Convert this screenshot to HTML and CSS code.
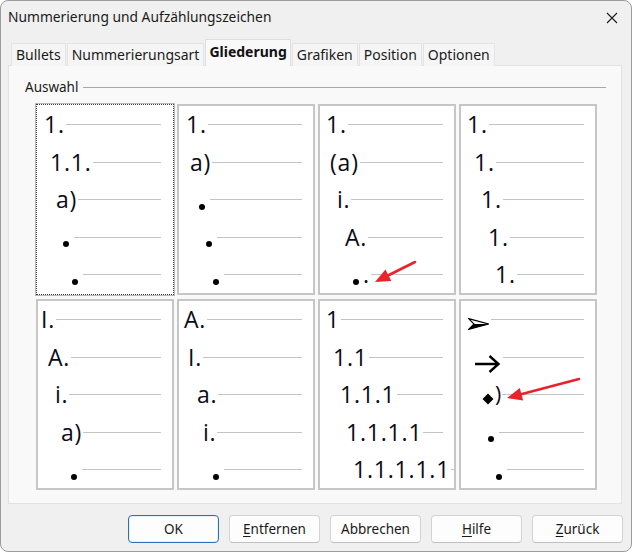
FILE: index.html
```html
<!DOCTYPE html>
<html lang="de">
<head>
<meta charset="utf-8">
<title>Nummerierung und Aufzählungszeichen</title>
<link rel="stylesheet" href="styles.css">
</head>
<body>
<div class="window">
  <div class="titlebar">
    <span class="title">Nummerierung und Aufzählungszeichen</span>
    <svg class="close" width="12" height="12" viewBox="0 0 12 12"><path d="M1 1 L11 11 M11 1 L1 11" stroke="#1c1c1c" stroke-width="1.1" fill="none"/></svg>
  </div>
  <div class="tabs">
    <div class="tab">Bullets</div>
    <div class="tab">Nummerierungsart</div>
    <div class="tab active">Gliederung</div>
    <div class="tab">Grafiken</div>
    <div class="tab">Position</div>
    <div class="tab">Optionen</div>
  </div>
  <div class="panel">
    <div class="legend"><span class="legend-text">Auswahl</span><span class="legend-rule"></span></div>
    <div class="grid">
      <div class="cell sel">
        <div class="row p6"><span class="num">1.</span><span class="rule"></span></div>
        <div class="row p12"><span class="num">1.1.</span><span class="rule"></span></div>
        <div class="row p18"><span class="num">a)</span><span class="rule"></span></div>
        <div class="row p25"><span class="dot"></span><span class="rule"></span></div>
        <div class="row p34"><span class="dot"></span><span class="rule"></span></div>
      </div>
      <div class="cell">
        <div class="row p7"><span class="num">1.</span><span class="rule"></span></div>
        <div class="row p11"><span class="num">a)</span><span class="rule"></span></div>
        <div class="row p20"><span class="dot"></span><span class="rule"></span></div>
        <div class="row p27"><span class="dot"></span><span class="rule"></span></div>
        <div class="row p34"><span class="dot"></span><span class="rule"></span></div>
      </div>
      <div class="cell">
        <div class="row p6"><span class="num">1.</span><span class="rule"></span></div>
        <div class="row p10"><span class="num">(a)</span><span class="rule"></span></div>
        <div class="row p17"><span class="num">i.</span><span class="rule"></span></div>
        <div class="row p25"><span class="num">A.</span><span class="rule"></span></div>
        <div class="row p33"><span class="dot"></span><span class="num">.</span><span class="rule"></span></div>
        <svg class="arrow" viewBox="0 0 134 187" width="134" height="187"><line x1="95" y1="156" x2="68" y2="169.5" stroke="#e8232b" stroke-width="2.6" stroke-linecap="round"/><polygon points="55,176 71.3,175.1 65.5,163.5" fill="#e8232b"/></svg>
      </div>
      <div class="cell">
        <div class="row p6"><span class="num">1.</span><span class="rule"></span></div>
        <div class="row p13"><span class="num">1.</span><span class="rule"></span></div>
        <div class="row p20"><span class="num">1.</span><span class="rule"></span></div>
        <div class="row p27"><span class="num">1.</span><span class="rule"></span></div>
        <div class="row p34"><span class="num">1.</span><span class="rule"></span></div>
      </div>
      <div class="cell">
        <div class="row p3"><span class="num">I.</span><span class="rule"></span></div>
        <div class="row p10"><span class="num">A.</span><span class="rule"></span></div>
        <div class="row p17"><span class="num">i.</span><span class="rule"></span></div>
        <div class="row p23"><span class="num">a)</span><span class="rule"></span></div>
        <div class="row p33"><span class="dot"></span><span class="rule"></span></div>
      </div>
      <div class="cell">
        <div class="row p5"><span class="num">A.</span><span class="rule"></span></div>
        <div class="row p9"><span class="num">I.</span><span class="rule"></span></div>
        <div class="row p18"><span class="num">a.</span><span class="rule"></span></div>
        <div class="row p24"><span class="num">i.</span><span class="rule"></span></div>
        <div class="row p34"><span class="dot"></span><span class="rule"></span></div>
      </div>
      <div class="cell">
        <div class="row p6"><span class="num">1</span><span class="rule"></span></div>
        <div class="row p13"><span class="num">1.1</span><span class="rule"></span></div>
        <div class="row p20"><span class="num">1.1.1</span><span class="rule"></span></div>
        <div class="row p26"><span class="num">1.1.1.1</span><span class="rule"></span></div>
        <div class="row p33"><span class="num">1.1.1.1.1</span><span class="rule"></span></div>
      </div>
      <div class="cell">
        <div class="row p7">
          <svg class="sym sym-arrowhead" width="21" height="12" viewBox="0 0 21 12"><polygon points="0.6,0.6 20.4,6 0.6,11.4 6,6" fill="#fff" stroke="#000" stroke-width="1.1" stroke-linejoin="miter"/><polygon points="0.6,11.4 20.4,6 6,6" fill="#000"/></svg>
          <span class="rule"></span>
        </div>
        <div class="row p14">
          <svg class="sym sym-right" width="26" height="18" viewBox="0 0 26 18"><path d="M0 9 H23.5 M14.5 1 L23.5 9 L14.5 17" stroke="#000" stroke-width="2.4" fill="none"/></svg>
          <span class="rule"></span>
        </div>
        <div class="row p21">
          <svg class="sym sym-diamond" width="12" height="12" viewBox="0 0 12 12"><polygon points="6,0.5 11.5,6 6,11.5 0.5,6" fill="#000"/></svg>
          <span class="num paren">)</span><span class="rule"></span>
        </div>
        <div class="row p27"><span class="dot"></span><span class="rule"></span></div>
        <div class="row p35"><span class="dot"></span><span class="rule"></span></div>
        <svg class="arrow" viewBox="0 0 134 187" width="134" height="187"><line x1="118" y1="78" x2="60" y2="93.3" stroke="#e8232b" stroke-width="2.6" stroke-linecap="round"/><polygon points="46,97 62.2,99.5 58.8,86.9" fill="#e8232b"/></svg>
      </div>
    </div>
  </div>
  <div class="buttons">
    <div class="btn default">OK</div>
    <div class="btn"><u>E</u>ntfernen</div>
    <div class="btn">Abbrechen</div>
    <div class="btn"><u>H</u>ilfe</div>
    <div class="btn"><u>Z</u>urück</div>
  </div>
</div>
</body>
</html>
```
FILE: styles.css
```css
html, body {
  margin: 0;
  padding: 0;
  background: #ffffff;
}

.window {
  width: 632px;
  height: 552px;
  box-sizing: border-box;
  border: 1px solid #9c9c9c;
  border-radius: 8px;
  background: #f0f0f0;
  font-family: "Noto Sans", "Open Sans", sans-serif;
  font-size: 13.5px;
  color: #1a1a1a;
  display: flex;
  flex-direction: column;
  overflow: hidden;
}

.titlebar {
  height: 39px;
  display: flex;
  align-items: flex-start;
  justify-content: space-between;
  padding: 0 13px 0 7px;
}

.title {
  margin-top: 6px;
  font-size: 13.8px;
  color: #1a1a1a;
  line-height: 20px;
}

.close {
  margin-top: 11px;
}

.tabs {
  height: 26px;
  display: flex;
  align-items: flex-end;
  gap: 1px;
  padding-left: 10px;
  position: relative;
  z-index: 1;
  margin-bottom: -1px;
  font-size: 14px;
}

.tab {
  height: 23px;
  box-sizing: border-box;
  padding: 0 4px;
  line-height: 22px;
  background: #f5f5f5;
  border: 1px solid #e4e4e4;
  border-bottom: none;
  color: #1a1a1a;
}

.tab.active {
  height: 27px;
  background: #f9f9f9;
  border-color: #dedede;
  font-weight: 700;
  line-height: 24px;
  padding: 0 3px;
  color: #111;
}

.panel {
  margin-left: 7px;
  width: 614px;
  height: 439px;
  box-sizing: border-box;
  border: 1px solid #e2e2e2;
  background: #f9f9f9;
  display: flex;
  flex-direction: column;
}

.legend {
  display: flex;
  align-items: center;
  height: 19px;
  margin: 11px 15px 0 16px;
}

.legend-text {
  color: #1a1a1a;
}

.legend-rule {
  flex: 1;
  height: 1px;
  background: #a8a8a8;
  margin-left: 5px;
  margin-top: 1px;
}

.grid {
  display: grid;
  grid-template-columns: repeat(4, 138px);
  grid-template-rows: repeat(2, 191px);
  column-gap: 3px;
  row-gap: 4px;
  margin: 8px 0 0 27px;
}

.cell {
  position: relative;
  box-sizing: border-box;
  border: 2px solid #c6c6c6;
  background: #ffffff;
  padding-right: 11px;
  overflow: hidden;
}

.cell.sel {
  border: 1px dotted #3a3a3a;
  padding: 1px 12px 1px 1px;
  box-shadow: 0 0 0 1px #b8b8b8;
}

.row {
  height: 37.5px;
  display: flex;
  align-items: center;
}

.num {
  font-family: "Open Sans", "Noto Sans", sans-serif;
  font-size: 23px;
  line-height: 23px;
  letter-spacing: 0.8px;
  color: #0b0b18;
  white-space: nowrap;
}

.paren {
  font-size: 21px;
  letter-spacing: 0;
}

.rule {
  flex: 1;
  min-width: 3px;
  height: 1px;
  background: #c4c4c4;
  margin-left: 1px;
}

.dot {
  width: 6px;
  height: 6px;
  border-radius: 50%;
  background: #000;
  margin: 14px 4px 0 0;
  flex: none;
}

.sym {
  flex: none;
  display: block;
}

.sym-arrowhead {
  margin-top: 9px;
  margin-right: 1px;
}

.sym-right {
  margin-top: 13px;
  margin-right: 1px;
}

.sym-diamond {
  margin-top: 8px;
  margin-right: 1px;
}

.arrow {
  position: absolute;
  left: 0;
  top: 0;
  overflow: visible;
  pointer-events: none;
}

.p3 { padding-left: 3px; }
.p5 { padding-left: 5px; }
.p6 { padding-left: 6px; }
.p7 { padding-left: 7px; }
.p9 { padding-left: 9px; }
.p10 { padding-left: 10px; }
.p11 { padding-left: 11px; }
.p12 { padding-left: 12px; }
.p13 { padding-left: 13px; }
.p14 { padding-left: 14px; }
.p17 { padding-left: 17px; }
.p18 { padding-left: 18px; }
.p20 { padding-left: 20px; }
.p21 { padding-left: 21px; }
.p23 { padding-left: 23px; }
.p24 { padding-left: 24px; }
.p25 { padding-left: 25px; }
.p26 { padding-left: 26px; }
.p27 { padding-left: 27px; }
.p33 { padding-left: 33px; }
.p34 { padding-left: 34px; }
.p35 { padding-left: 35px; }

.buttons {
  display: flex;
  justify-content: flex-end;
  gap: 10px;
  margin-top: 11px;
  padding-right: 8px;
}

.btn {
  width: 91px;
  height: 28px;
  box-sizing: border-box;
  border: 1px solid #d3d3d3;
  border-bottom-color: #bfbfbf;
  border-radius: 4px;
  background: #fdfdfd;
  display: flex;
  align-items: center;
  justify-content: center;
  color: #1a1a1a;
}

.btn.default {
  border: 1px solid #2f6db5;
  box-shadow: inset 0 0 0 1px #e6effa;
}

.btn u {
  text-decoration-thickness: 1px;
  text-underline-offset: 2px;
}
```
